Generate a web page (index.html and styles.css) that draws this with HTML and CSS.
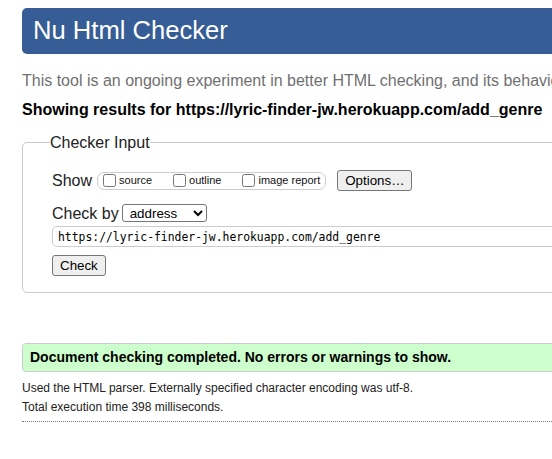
FILE: index.html
```html
<!DOCTYPE html>
<html lang="en">
<head>
<meta charset="utf-8">
<title>Nu Html Checker</title>
<link rel="stylesheet" href="styles.css">
</head>
<body>
<div class="page">
  <h1 class="masthead">Nu Html Checker</h1>
  <p class="intro">This tool is an ongoing experiment in better HTML checking, and its behavior remains subject to change</p>
  <p class="showing">Showing results for https://lyric-finder-jw.herokuapp.com/add_genre</p>
  <form class="checker-form">
    <fieldset class="checker">
      <legend class="checker-legend">Checker Input</legend>
      <div class="row show-row">
        <span class="row-label">Show</span>
        <span class="opts">
          <label class="opt"><input type="checkbox" class="cb"><span>source</span></label>
          <label class="opt"><input type="checkbox" class="cb"><span>outline</span></label>
          <label class="opt last"><input type="checkbox" class="cb"><span>image report</span></label>
        </span>
        <button type="button" class="btn options-btn">Options…</button>
      </div>
      <div class="row by-row">
        <span class="row-label">Check by</span>
        <select class="sel"><option>address</option></select>
      </div>
      <input class="url" type="text" value="https://lyric-finder-jw.herokuapp.com/add_genre">
      <div class="row submit-row">
        <button type="button" class="btn">Check</button>
      </div>
    </fieldset>
  </form>
  <p class="success">Document checking completed. No errors or warnings to show.</p>
  <p class="details">Used the HTML parser. Externally specified character encoding was utf-8.</p>
  <p class="details">Total execution time 398 milliseconds.</p>
  <hr class="dots">
</div>
</body>
</html>
```

FILE: styles.css
```css
html {
  overflow: hidden;
  background: #fff;
}
body {
  margin: 0;
  font-family: "Liberation Sans", Arial, sans-serif;
  color: #000;
}
.page {
  width: 820px;
  margin-left: 22px;
  padding-top: 8px;
}
.masthead {
  margin: 0;
  height: 46px;
  box-sizing: border-box;
  padding: 0 0 1px 11px;
  background: #365d95;
  color: #fff;
  font-size: 25.6px;
  font-weight: normal;
  line-height: 45px;
  border-radius: 5px 0 0 5px;
}
.intro {
  margin: 17px 0 0;
  font-size: 16px;
  line-height: 19px;
  color: #707070;
  white-space: nowrap;
}
.showing {
  margin: 10px 0 0;
  font-size: 16px;
  line-height: 19px;
  font-weight: bold;
  white-space: nowrap;
}
.checker-form {
  margin: 14px 0 0;
}
.checker {
  margin: 0;
  border: 1px solid #ccc;
  border-radius: 5px;
  padding: 18px 0 16px 29px;
}
.checker-legend {
  padding: 0;
  margin-left: -2px;
  font-size: 16px;
  line-height: 19px;
  color: #222;
}
.row {
  display: flex;
  align-items: center;
}
.show-row {
  height: 21px;
}
.row-label {
  font-size: 16px;
  line-height: 19px;
  color: #222;
}
.opts {
  display: flex;
  align-items: center;
  height: 18px;
  box-sizing: border-box;
  margin-left: 5px;
  border: 1px solid #ccc;
  border-radius: 7px;
  padding: 0 5px 0 1px;
}
.opt {
  display: flex;
  align-items: center;
  margin-right: 17px;
  font-size: 11px;
  line-height: 13px;
  color: #111;
}
.opt.last {
  margin-right: 0;
}
.cb {
  width: 13px;
  height: 13px;
  margin: 0 3px 0 4px;
}
.btn {
  height: 21px;
  box-sizing: border-box;
  padding: 0 7px;
  border: 1px solid #767676;
  border-radius: 3px;
  background: #efefef;
  color: #000;
  font-family: "Liberation Sans", Arial, sans-serif;
  font-size: 13.33px;
  line-height: 19px;
}
.options-btn {
  margin-left: 11px;
  width: 75px;
}
.by-row {
  height: 20px;
  margin-top: 12px;
}
.sel {
  width: 85px;
  height: 18px;
  margin-left: 3px;
  font-family: "Liberation Sans", Arial, sans-serif;
  font-size: 13.33px;
  border: 1px solid #767676;
  border-radius: 3px;
  background: #fff;
  color: #000;
  padding: 0 0 0 3px;
}
.url {
  display: block;
  box-sizing: border-box;
  width: 100%;
  height: 21px;
  margin-top: 3px;
  padding: 0 5px;
  border: 1px solid #ccc;
  border-radius: 5px;
  font-family: "DejaVu Sans Mono", "Liberation Mono", monospace;
  font-size: 11.4px;
  color: #000;
  background: #fff;
}
.submit-row {
  margin-top: 8px;
}
.success {
  margin: 50px 0 0;
  padding: 5px 7px;
  border: 1px solid #ccc;
  border-radius: 4px;
  background: #ccffcc;
  font-size: 14px;
  line-height: 17px;
  font-weight: bold;
}
.details {
  margin: 0;
  font-size: 12px;
  line-height: 19px;
  color: #222;
}
.success + .details {
  margin-top: 7px;
}
.dots {
  margin: 4px 0 0;
  height: 0;
  border: 0;
  border-top: 1px dotted #777;
}
```
